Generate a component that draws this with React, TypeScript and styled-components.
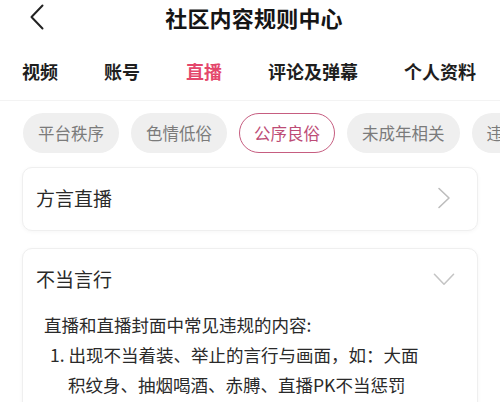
import React from "react";
import styled, { createGlobalStyle } from "styled-components";

const GlobalStyle = createGlobalStyle`
  html, body {
    margin: 0;
    padding: 0;
    background: #ffffff;
  }
  body {
    font-family: "Noto Sans CJK SC", "Noto Sans", sans-serif;
    color: #222;
  }
`;

const Page = styled.div`
  width: 500px;
  height: 402px;
  overflow: hidden;
  background: #ffffff;
`;

const Header = styled.div`
  display: grid;
  grid-template-columns: 1fr auto 1fr;
  align-items: center;
  height: 34px;
  padding: 0 22px 2px 30px;
`;

const BackButton = styled.div`
  display: flex;
  align-items: center;
  justify-self: start;
`;

const Title = styled.h1`
  margin: 0;
  font-size: 22px;
  line-height: 30px;
  font-weight: 700;
  color: #151515;
  letter-spacing: 0.2px;
`;

const TabBar = styled.div`
  display: flex;
  gap: 46px;
  padding: 23px 22px 17px;
  border-bottom: 1px solid #f3f3f3;
`;

const Tab = styled.div<{ $active?: boolean }>`
  font-size: 18px;
  line-height: 24px;
  font-weight: 700;
  white-space: nowrap;
  color: ${(p) => (p.$active ? "#e4476c" : "#1e1e1e")};
`;

const ChipRow = styled.div`
  display: flex;
  gap: 12px;
  margin-top: 12px;
  padding-left: 23px;
  overflow: hidden;
`;

const Chip = styled.div<{ $active?: boolean }>`
  flex: none;
  display: flex;
  align-items: center;
  height: 40px;
  box-sizing: border-box;
  padding: 0 14px 1px;
  border-radius: 20px;
  font-size: 16.5px;
  white-space: nowrap;
  background: ${(p) => (p.$active ? "#ffffff" : "#efefef")};
  border: 1.5px solid ${(p) => (p.$active ? "#c65d80" : "transparent")};
  color: ${(p) => (p.$active ? "#bd4c76" : "#7b7b7b")};
`;

const CardList = styled.div`
  display: flex;
  flex-direction: column;
  gap: 17px;
  padding: 14px 22px 0;
`;

const Card = styled.div`
  border: 1px solid #efefef;
  border-radius: 10px;
  background: #ffffff;
  box-shadow: 0 1px 4px rgba(0, 0, 0, 0.04);
`;

const CardHeader = styled.div<{ $height: number }>`
  display: flex;
  align-items: center;
  justify-content: space-between;
  box-sizing: border-box;
  height: ${(p) => p.$height}px;
  padding: 0 22px 3px 13px;
`;

const CardTitle = styled.span`
  font-size: 19px;
  line-height: 26px;
  color: #2a2a2a;
`;

const IconBox = styled.div`
  display: flex;
  align-items: center;
  justify-content: center;
  width: 22px;
`;

const CardBody = styled.div`
  padding: 0 20px 20px 21px;
  margin-top: -2px;
  font-size: 17.5px;
  line-height: 30px;
  color: #2a2a2a;
`;

const Para = styled.p`
  margin: 0;
`;

const ListItem = styled.p`
  margin: 0;
  padding-left: 24px;
  text-indent: -18px;
`;

const tabs = ["视频", "账号", "直播", "评论及弹幕", "个人资料"];
const chips = ["平台秩序", "色情低俗", "公序良俗", "未成年相关", "违法违规"];

const App: React.FC = () => {
  return (
    <Page>
      <GlobalStyle />
      <Header>
        <BackButton>
          <svg width="14" height="26" viewBox="0 0 14 26" fill="none">
            <polyline
              points="12.5,1.5 1.5,13 12.5,24.5"
              stroke="#222"
              strokeWidth="2"
              strokeLinecap="round"
              strokeLinejoin="round"
            />
          </svg>
        </BackButton>
        <Title>社区内容规则中心</Title>
        <div />
      </Header>

      <TabBar>
        {tabs.map((t) => (
          <Tab key={t} $active={t === "直播"}>
            {t}
          </Tab>
        ))}
      </TabBar>

      <ChipRow>
        {chips.map((c) => (
          <Chip key={c} $active={c === "公序良俗"}>
            {c}
          </Chip>
        ))}
      </ChipRow>

      <CardList>
        <Card>
          <CardHeader $height={62}>
            <CardTitle>方言直播</CardTitle>
            <IconBox>
              <svg width="14" height="22" viewBox="0 0 14 22" fill="none">
                <polyline
                  points="2,1.5 12,11 2,20.5"
                  stroke="#bdbdbd"
                  strokeWidth="1.6"
                  strokeLinecap="round"
                  strokeLinejoin="round"
                />
              </svg>
            </IconBox>
          </CardHeader>
        </Card>

        <Card>
          <CardHeader $height={63}>
            <CardTitle>不当言行</CardTitle>
            <IconBox>
              <svg width="23" height="14" viewBox="0 0 23 14" fill="none">
                <polyline
                  points="1.5,2 11.5,12.5 21.5,2"
                  stroke="#c4c4c4"
                  strokeWidth="1.6"
                  strokeLinecap="round"
                  strokeLinejoin="round"
                />
              </svg>
            </IconBox>
          </CardHeader>
          <CardBody>
            <Para>直播和直播封面中常见违规的内容:</Para>
            <ListItem>
              1. 出现不当着装、举止的言行与画面，如：大面
              <br />
              积纹身、抽烟喝酒、赤膊、直播PK不当惩罚
            </ListItem>
          </CardBody>
        </Card>
      </CardList>
    </Page>
  );
};

export default App;
